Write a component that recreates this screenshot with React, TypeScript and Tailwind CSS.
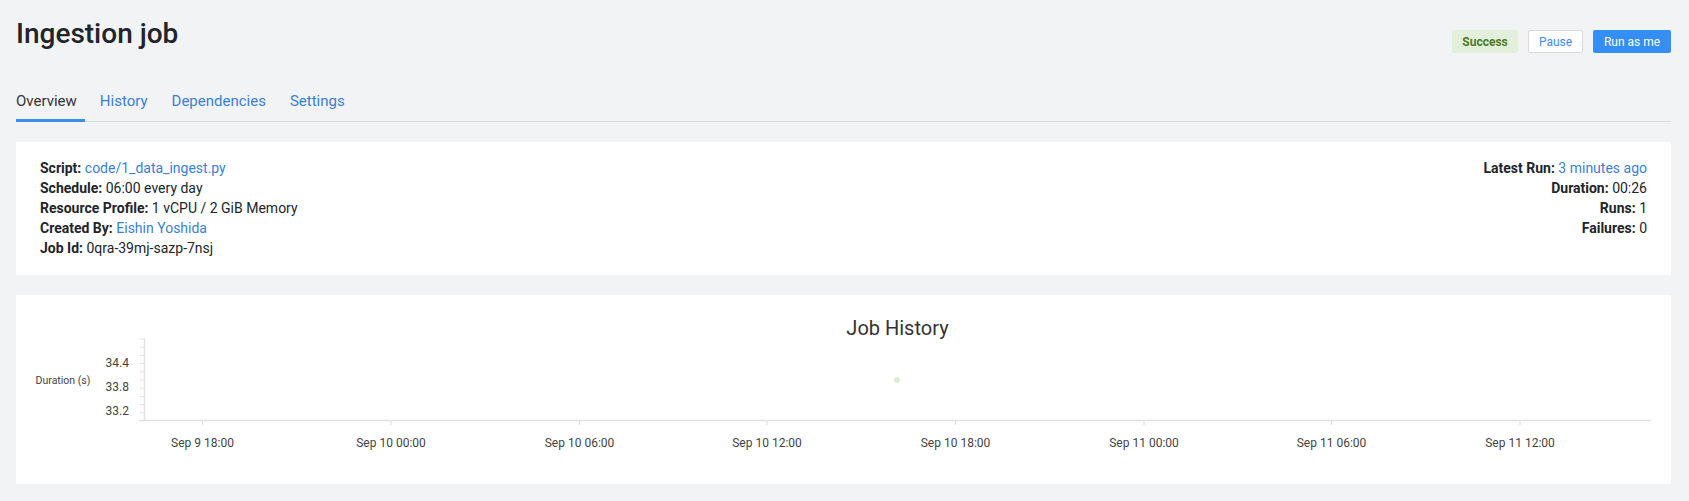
import React from "react";

const xTicks = [
  { x: 186.5, label: "Sep 9 18:00" },
  { x: 375, label: "Sep 10 00:00" },
  { x: 563.5, label: "Sep 10 06:00" },
  { x: 751, label: "Sep 10 12:00" },
  { x: 939.5, label: "Sep 10 18:00" },
  { x: 1128, label: "Sep 11 00:00" },
  { x: 1315.5, label: "Sep 11 06:00" },
  { x: 1504, label: "Sep 11 12:00" },
];

const yMinor = [44, 52.2, 60.4, 68.6, 76.8, 85, 93.2, 101.4, 109.6, 117.8];

function Chart() {
  return (
    <svg width="1655" height="189" viewBox="0 0 1655 189" className="block" style={{ fontFamily: "Roboto, 'Liberation Sans', sans-serif" }}>
      <text x="881.5" y="40" textAnchor="middle" fontSize="20" fill="#333">Job History</text>
      <text x="47" y="88.5" textAnchor="middle" fontSize="10.5" fill="#444">Duration (s)</text>
      {/* y axis */}
      <line x1="128.5" y1="43" x2="128.5" y2="126" stroke="#e2e2e2" strokeWidth="1.5" />
      {yMinor.map((y) => (
        <line key={y} x1="124" y1={y} x2="128" y2={y} stroke="#e2e2e2" strokeWidth="1" />
      ))}
      <text x="113" y="71.5" textAnchor="end" fontSize="12" fill="#444">34.4</text>
      <text x="113" y="96" textAnchor="end" fontSize="12" fill="#444">33.8</text>
      <text x="113" y="120" textAnchor="end" fontSize="12" fill="#444">33.2</text>
      {/* x axis */}
      <line x1="123" y1="125.5" x2="1635" y2="125.5" stroke="#e2e2e2" strokeWidth="1.5" />
      {xTicks.map((t) => (
        <g key={t.label}>
          <line x1={t.x} y1="126" x2={t.x} y2="130" stroke="#dcdcdc" strokeWidth="1" />
          <text x={t.x} y="152" textAnchor="middle" fontSize="12" fill="#444">{t.label}</text>
        </g>
      ))}
      <circle cx="881" cy="85" r="3" fill="#dcedd4" />
    </svg>
  );
}

export default function App() {
  return (
    <div className="min-h-[501px] bg-[#f2f3f5] pl-4 pr-[18px] text-[#212529]" style={{ fontFamily: "Roboto, 'Liberation Sans', sans-serif" }}>
      <div className="flex items-start justify-between pt-[17px]">
        <h1 className="text-[28px] font-medium leading-[34px] text-[#212529]">Ingestion job</h1>
        <div className="mt-[13px] flex items-center gap-[10px] text-[12px]">
          <span className="flex h-[23px] w-[66px] items-center justify-center rounded-[2px] bg-[#e2efda] font-bold text-[#4f7a28]">Success</span>
          <button className="flex h-[23px] w-[55px] items-center justify-center rounded-[2px] border border-[#d9d9d9] bg-white text-[#3b8eea]">Pause</button>
          <button className="flex h-[23px] w-[78px] items-center justify-center rounded-[2px] bg-[#348ef6] text-white">Run as me</button>
        </div>
      </div>

      <div className="mt-[38px] flex border-b border-[#d9dadc] text-[15px] leading-[20px]">
        <div className="relative pb-[10px] pr-[8px] text-[#333]">
          Overview
          <div className="absolute bottom-[-1px] left-0 right-0 h-[3px] bg-[#3b8eea]" />
        </div>
        <div className="ml-[15px] pb-[10px] text-[#3a7fd5]">History</div>
        <div className="ml-[24px] pb-[10px] text-[#3a7fd5]">Dependencies</div>
        <div className="ml-[24px] pb-[10px] text-[#3a7fd5]">Settings</div>
      </div>

      <div className="mt-[20px] flex justify-between bg-white px-6 pb-[17px] pt-[16px] text-[14px] leading-[20px]">
        <div>
          <div><b className="font-bold">Script:</b> <span className="text-[#3a7fd5]">code/1_data_ingest.py</span></div>
          <div><b className="font-bold">Schedule:</b> 06:00 every day</div>
          <div><b className="font-bold">Resource Profile:</b> 1 vCPU / 2 GiB Memory</div>
          <div><b className="font-bold">Created By:</b> <span className="text-[#3a7fd5]">Eishin Yoshida</span></div>
          <div><b className="font-bold">Job Id:</b> 0qra-39mj-sazp-7nsj</div>
        </div>
        <div className="text-right">
          <div><b className="font-bold">Latest Run:</b> <span className="text-[#3a7fd5]">3 minutes ago</span></div>
          <div><b className="font-bold">Duration:</b> 00:26</div>
          <div><b className="font-bold">Runs:</b> 1</div>
          <div><b className="font-bold">Failures:</b> 0</div>
        </div>
      </div>

      <div className="mt-[20px] bg-white">
        <Chart />
      </div>
    </div>
  );
}
